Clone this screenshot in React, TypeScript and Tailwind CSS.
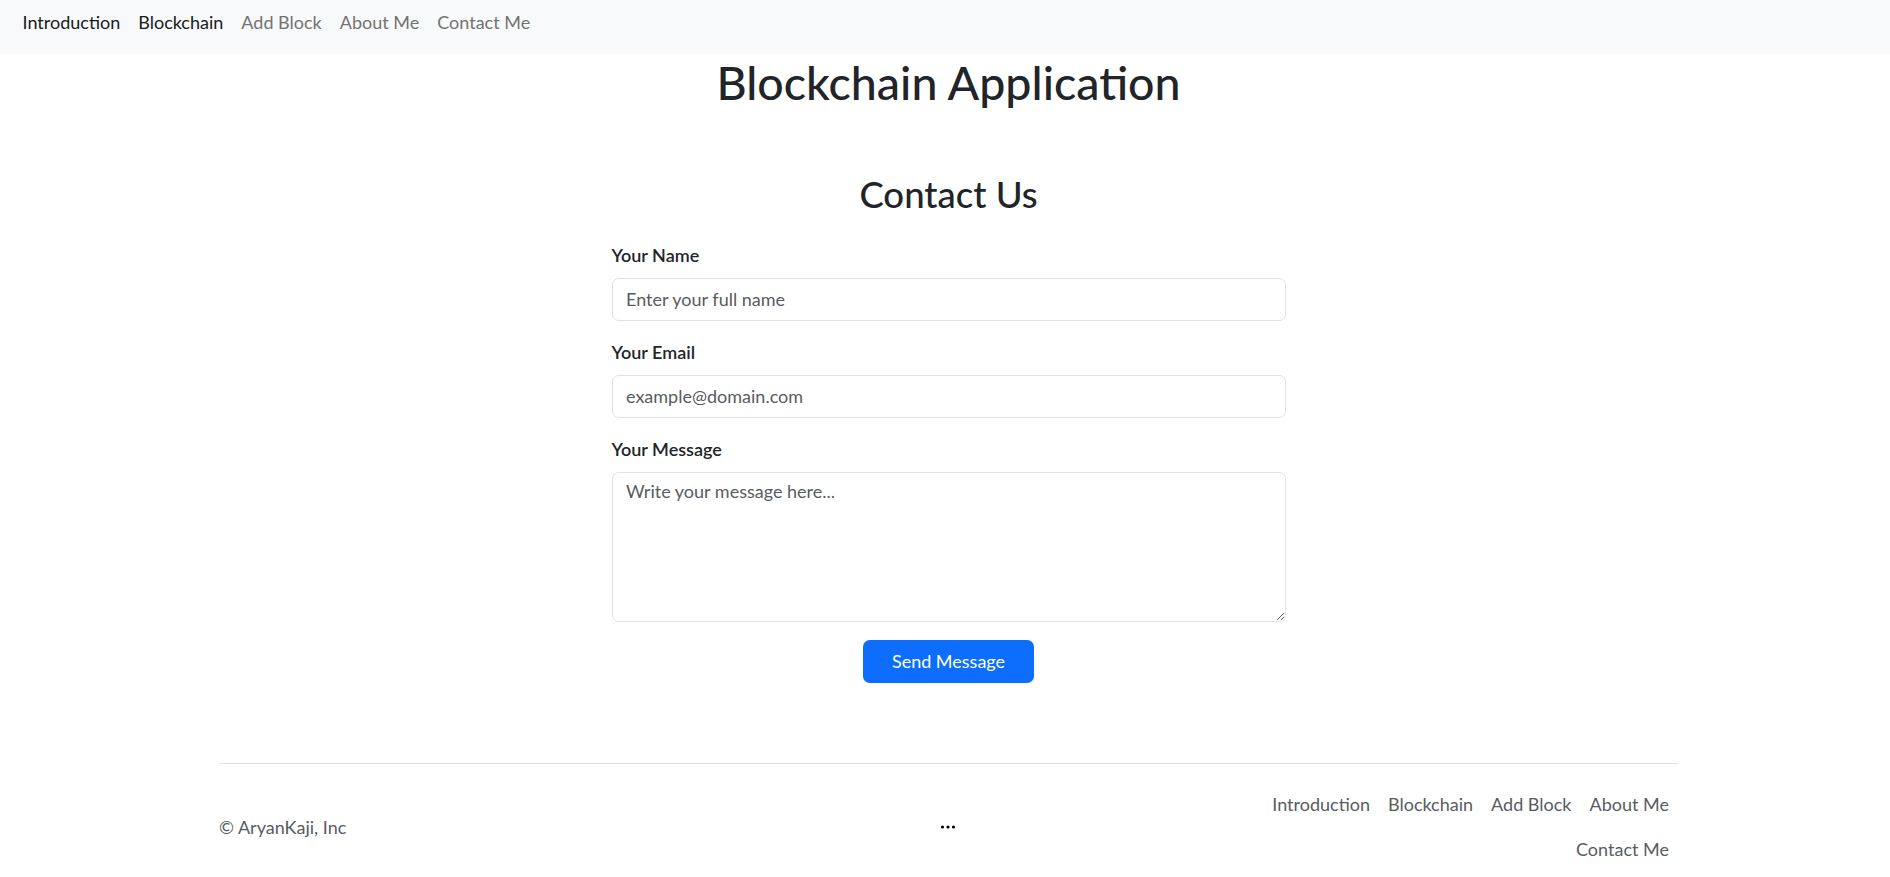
import { useState } from 'react';

const navLinks = ['Introduction', 'Blockchain', 'Add Block', 'About Me', 'Contact Me'];

export default function App() {
  const [name, setName] = useState('');
  const [email, setEmail] = useState('');
  const [message, setMessage] = useState('');

  return (
    <div className="min-h-screen bg-white font-['Lato',sans-serif] text-[#212529]">
      {/* navbar */}
      <nav className="h-[54px] bg-[#f8f9fa] px-[13.5px] flex items-start">
        {navLinks.map((link, i) => (
          <a
            key={link}
            href="#"
            className={`px-[9px] py-[9px] text-[18px] leading-[27px] ${i < 2 ? 'text-[#1a1a1a]' : 'text-[#737373]'}`}
          >
            {link}
          </a>
        ))}
      </nav>

      <div className="pl-[7px]">
        <h1 className="mt-[1px] text-center text-[46.5px] leading-[1.2] font-medium">Blockchain Application</h1>

        {/* contact form */}
        <div className="w-[674px] mx-auto mt-[61px] mb-[80px]">
          <h2 className="pt-[1.5px] text-center text-[36.5px] leading-[1.2] font-medium mb-[25px]">Contact Us</h2>

          <div className="mb-[18px]">
            <label className="block mb-[9px] text-[18px] leading-[27px] font-semibold">Your Name</label>
            <input
              type="text"
              value={name}
              onChange={(e) => setName(e.target.value)}
              placeholder="Enter your full name"
              className="block w-full h-[42.75px] px-[13.5px] border border-[#dee2e6] rounded-[6.75px] text-[18px] placeholder:text-[#595c5f] outline-none"
            />
          </div>

          <div className="mb-[18px]">
            <label className="block mb-[9px] text-[18px] leading-[27px] font-semibold">Your Email</label>
            <input
              type="email"
              value={email}
              onChange={(e) => setEmail(e.target.value)}
              placeholder="example@domain.com"
              className="block w-full h-[42.75px] px-[13.5px] border border-[#dee2e6] rounded-[6.75px] text-[18px] placeholder:text-[#595c5f] outline-none"
            />
          </div>

          <div className="mb-[18px]">
            <label className="block mb-[9px] text-[18px] leading-[27px] font-semibold">Your Message</label>
            <textarea
              rows={5}
              value={message}
              onChange={(e) => setMessage(e.target.value)}
              placeholder="Write your message here..."
              className="block w-full h-[150.75px] pt-[5px] px-[13.5px] border border-[#dee2e6] rounded-[6.75px] text-[18px] leading-[27px] placeholder:text-[#595c5f] outline-none"
            />
          </div>

          <button className="block mx-auto w-[171px] h-[42.75px] bg-[#0d6efd] text-white text-[18px] rounded-[6.75px]">
            Send Message
          </button>
        </div>

        {/* footer */}
        <footer className="w-[1459px] mx-auto border-t border-[#dee2e6] pt-[18px] pb-[18px] flex items-center">
          <p className="w-1/3 text-[18px] leading-[27px] text-[#595c5f]">© AryanKaji, Inc</p>
          <div className="w-1/3 flex justify-center">
            <svg width="16" height="4" viewBox="0 0 16 4">
              <circle cx="2.5" cy="2" r="1.6" fill="#000" />
              <circle cx="8" cy="2" r="1.6" fill="#000" />
              <circle cx="13.5" cy="2" r="1.6" fill="#000" />
            </svg>
          </div>
          <ul className="w-1/3 flex flex-wrap justify-end">
            {navLinks.map((link) => (
              <li key={link}>
                <a href="#" className="block px-[9px] py-[9px] text-[18px] leading-[27px] text-[#595c5f]">
                  {link}
                </a>
              </li>
            ))}
          </ul>
        </footer>
      </div>
    </div>
  );
}
